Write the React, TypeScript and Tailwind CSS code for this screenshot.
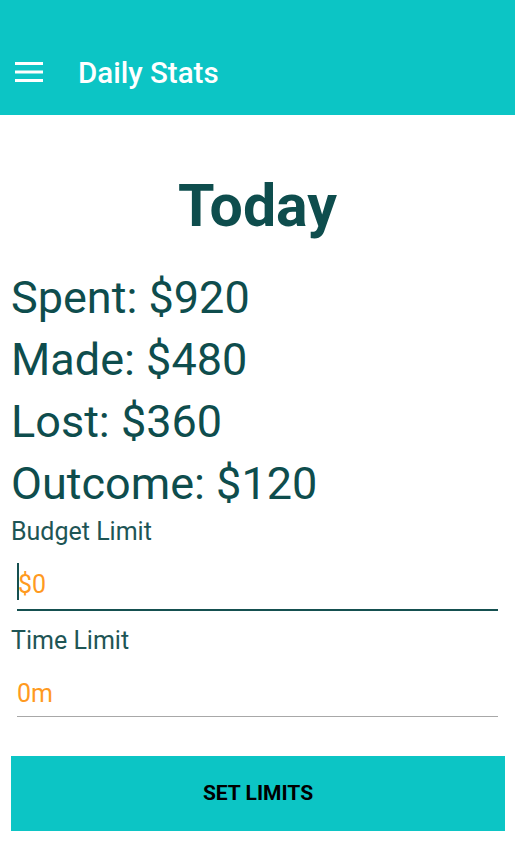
import React, { useState } from "react";

export default function App() {
  const [budget, setBudget] = useState("");
  const [time, setTime] = useState("");

  const stats = [
    ["Spent", 920],
    ["Made", 480],
    ["Lost", 360],
    ["Outcome", 120],
  ];

  return (
    <div className="w-[515px] h-[854px] bg-white font-['Roboto',sans-serif] overflow-hidden">
      {/* app bar */}
      <div className="h-[115px] bg-[#0cc5c5] flex items-end pb-[27px]">
        <div className="flex items-center">
          <svg width="30" height="20" viewBox="0 0 30 20" className="ml-[14px] -mt-[3px]">
            <rect x="1" y="0" width="28" height="3" fill="#fff" />
            <rect x="1" y="8.5" width="28" height="3" fill="#fff" />
            <rect x="1" y="17" width="28" height="3" fill="#fff" />
          </svg>
          <h1 className="ml-[34px] text-white text-[29.5px] font-medium leading-none">
            Daily Stats
          </h1>
        </div>
      </div>

      <div className="pt-[56px]">
        <h2 className="text-center text-[59px] font-bold leading-[70px] text-[#0e4d4d]">
          Today
        </h2>

        <div className="mt-[26px] pl-[11px]">
          {stats.map(([label, val]) => (
            <div
              key={label}
              className="text-[45px] leading-[62px] text-[#0e4d4d]"
            >
              {label}: ${val}
            </div>
          ))}
        </div>

        <div className="px-[11px]">
          <label className="block mt-[2px] text-[25px] leading-[30px] text-[#1e5555]">
            Budget Limit
          </label>
          <div className="mx-[6px] border-b-2 border-[#155050] h-[64px] flex items-end pb-[9px]">
            <span className="w-[2px] h-[37px] bg-[#155050]" />
            <input
              value={budget}
              onChange={(e) => setBudget(e.target.value)}
              placeholder="$0"
              className="flex-1 -ml-[1px] text-[25px] leading-[30px] h-[30px] outline-none bg-transparent placeholder:text-[#ff9a1f] text-[#ff9a1f]"
            />
          </div>

          <label className="block mt-[15px] text-[25px] leading-[30px] text-[#1e5555]">
            Time Limit
          </label>
          <div className="mx-[6px] border-b border-[#a8a8a8] h-[61px] flex items-end pb-[7px]">
            <input
              value={time}
              onChange={(e) => setTime(e.target.value)}
              placeholder="0m"
              className="flex-1 text-[25px] leading-[30px] h-[30px] outline-none bg-transparent placeholder:text-[#ff9a1f] text-[#ff9a1f]"
            />
          </div>
        </div>

        <button
          type="button"
          className="mt-[39px] ml-[11px] w-[494px] h-[75px] bg-[#0cc5c5] text-black font-bold text-[21px] uppercase"
        >
          Set Limits
        </button>
      </div>
    </div>
  );
}
